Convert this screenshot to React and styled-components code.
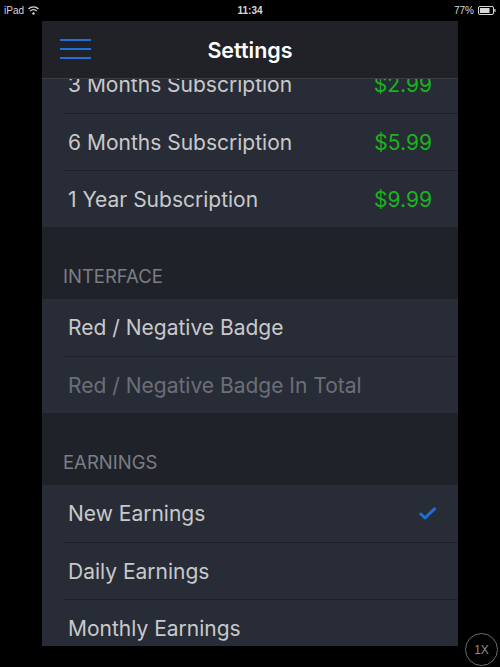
import styled, { createGlobalStyle } from 'styled-components';

const Global = createGlobalStyle`
    html, body {
        margin: 0;
        padding: 0;
        background: #000;
        font-family: Inter, "Noto Sans", sans-serif;
    }
`;

const Screen = styled.div`
    width: 500px;
    height: 667px;
    background: #000;
    position: relative;
    overflow: hidden;
`;

const StatusBar = styled.div`
    height: 21px;
    display: flex;
    align-items: center;
    justify-content: space-between;
    padding: 0 4px;
    color: #d8d8d8;
    font-size: 10px;
    font-family: "Liberation Sans", sans-serif;
`;

const StatusSide = styled.div`
    display: flex;
    align-items: center;
    gap: 4px;
    width: 80px;
    justify-content: ${p => (p.$right ? 'flex-end' : 'flex-start')};
`;

const Clock = styled.div`
    font-weight: bold;
`;

const Panel = styled.div`
    margin: 0 42px;
    height: 625px;
    background: #1f2229;
    position: relative;
    overflow: hidden;
`;

const Header = styled.div`
    position: absolute;
    top: 0;
    left: 0;
    right: 0;
    height: 57px;
    background: #202228;
    border-bottom: 1px solid #3b3d43;
    display: flex;
    align-items: center;
    justify-content: center;
    z-index: 2;
`;

const Menu = styled.div`
    position: absolute;
    left: 18px;
    top: 18px;
    width: 31px;
    display: flex;
    flex-direction: column;
    gap: 7px;
`;

const MenuLine = styled.div`
    height: 2px;
    background: #1e6fd6;
`;

const Title = styled.div`
    color: #fff;
    font-size: 21.5px;
    font-weight: 600;
    margin-top: 1px;
`;

const List = styled.div`
    padding-top: 35px;
`;

const Group = styled.div`
    background: #282c37;
`;

const Row = styled.div`
    height: 57px;
    margin-left: 21px;
    padding: 0 ${p => (p.$check ? '22px' : '26px')} 0 5px;
    display: flex;
    align-items: center;
    justify-content: space-between;
    border-top: ${p => (p.$first ? 'none' : '1px solid #1d2029')};
    box-sizing: border-box;
`;

const Label = styled.div`
    font-size: 21px;
    color: ${p => (p.$muted ? '#6c6f77' : '#c9c9cb')};
`;

const Price = styled.div`
    font-size: 21px;
    color: #18b41c;
`;

const SectionHead = styled.div`
    height: 72px;
    box-sizing: border-box;
    padding: 0 0 12px 21px;
    display: flex;
    align-items: flex-end;
    color: #7b7e86;
    font-size: 18.5px;
`;

const OneX = styled.div`
    position: absolute;
    right: 2px;
    bottom: 1px;
    width: 31px;
    height: 31px;
    border: 1.5px solid #6a6d73;
    border-radius: 50%;
    color: #8a8d93;
    font-size: 12px;
    display: flex;
    align-items: center;
    justify-content: center;
    font-family: "Liberation Sans", sans-serif;
`;

const Check = () => (
    <svg width="17" height="13" viewBox="0 0 17 13">
        <path d="M1.8 7 L6 11 L15.5 1.8" fill="none" stroke="#1e6fd6" strokeWidth="3" strokeLinecap="round" strokeLinejoin="round" />
    </svg>
);

const Wifi = () => (
    <svg width="11" height="9" viewBox="0 0 11 9">
        <path d="M0.5 3 A7 7 0 0 1 10.5 3" fill="none" stroke="#d8d8d8" strokeWidth="1.3" />
        <path d="M2.3 5 A4.5 4.5 0 0 1 8.7 5" fill="none" stroke="#d8d8d8" strokeWidth="1.3" />
        <circle cx="5.5" cy="7.5" r="1.2" fill="#d8d8d8" />
    </svg>
);

const Battery = () => (
    <svg width="18" height="9" viewBox="0 0 18 9">
        <rect x="0.5" y="0.5" width="15" height="8" rx="1.5" fill="none" stroke="#d8d8d8" />
        <rect x="2" y="2" width="9.5" height="5" fill="#d8d8d8" />
        <rect x="16.3" y="3" width="1.2" height="3" fill="#d8d8d8" />
    </svg>
);

const subscriptions = [
    { name: '3 Months Subscription', price: '$2.99' },
    { name: '6 Months Subscription', price: '$5.99' },
    { name: '1 Year Subscription', price: '$9.99' },
];

const earnings = ['New Earnings', 'Daily Earnings', 'Monthly Earnings'];

const App = () => {
    return (
        <Screen>
            <Global />
            <StatusBar>
                <StatusSide>
                    <span>iPad</span>
                    <Wifi />
                </StatusSide>
                <Clock>11:34</Clock>
                <StatusSide $right>
                    <span>77%</span>
                    <Battery />
                </StatusSide>
            </StatusBar>
            <Panel>
                <Header>
                    <Menu>
                        <MenuLine />
                        <MenuLine />
                        <MenuLine />
                    </Menu>
                    <Title>Settings</Title>
                </Header>
                <List>
                    <Group>
                        {subscriptions.map((s, i) => (
                            <Row key={s.name} $first={i === 0}>
                                <Label>{s.name}</Label>
                                <Price>{s.price}</Price>
                            </Row>
                        ))}
                    </Group>
                    <SectionHead>INTERFACE</SectionHead>
                    <Group>
                        <Row $first>
                            <Label>Red / Negative Badge</Label>
                        </Row>
                        <Row>
                            <Label $muted>Red / Negative Badge In Total</Label>
                        </Row>
                    </Group>
                    <SectionHead>EARNINGS</SectionHead>
                    <Group>
                        {earnings.map((e, i) => (
                            <Row key={e} $first={i === 0} $check={i === 0}>
                                <Label>{e}</Label>
                                {i === 0 && <Check />}
                            </Row>
                        ))}
                    </Group>
                </List>
            </Panel>
            <OneX>1X</OneX>
        </Screen>
    );
};

export default App;
